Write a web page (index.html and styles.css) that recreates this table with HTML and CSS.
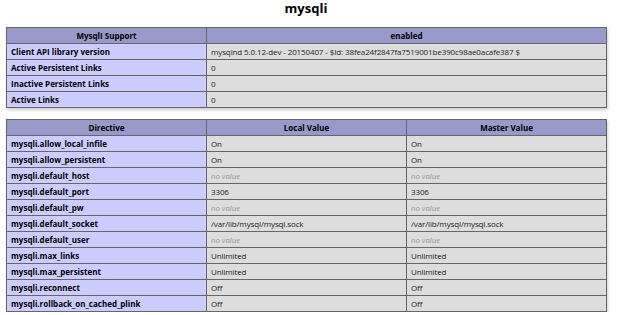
FILE: index.html
```html
<!DOCTYPE html>
<html>
<head>
<meta charset="utf-8">
<link rel="stylesheet" href="styles.css">
</head>
<body>
<div class="page">
  <h2 class="title">mysqli</h2>
  <table class="info">
    <colgroup><col class="c1"><col class="c2"></colgroup>
    <tr class="h"><th>MysqlI Support</th><th>enabled</th></tr>
    <tr><td class="e">Client API library version</td><td class="v">mysqlnd 5.0.12-dev - 20150407 - $Id: 38fea24f2847fa7519001be390c98ae0acafe387 $</td></tr>
    <tr><td class="e">Active Persistent Links</td><td class="v">0</td></tr>
    <tr><td class="e">Inactive Persistent Links</td><td class="v">0</td></tr>
    <tr><td class="e">Active Links</td><td class="v">0</td></tr>
  </table>
  <table class="info second">
    <colgroup><col class="c1"><col class="c3"><col class="c3"></colgroup>
    <tr class="h"><th>Directive</th><th>Local Value</th><th>Master Value</th></tr>
    <tr><td class="e">mysqli.allow_local_infile</td><td class="v">On</td><td class="v">On</td></tr>
    <tr><td class="e">mysqli.allow_persistent</td><td class="v">On</td><td class="v">On</td></tr>
    <tr><td class="e">mysqli.default_host</td><td class="v"><i>no value</i></td><td class="v"><i>no value</i></td></tr>
    <tr><td class="e">mysqli.default_port</td><td class="v">3306</td><td class="v">3306</td></tr>
    <tr><td class="e">mysqli.default_pw</td><td class="v"><i>no value</i></td><td class="v"><i>no value</i></td></tr>
    <tr><td class="e">mysqli.default_socket</td><td class="v">/var/lib/mysql/mysql.sock</td><td class="v">/var/lib/mysql/mysql.sock</td></tr>
    <tr><td class="e">mysqli.default_user</td><td class="v"><i>no value</i></td><td class="v"><i>no value</i></td></tr>
    <tr><td class="e">mysqli.max_links</td><td class="v">Unlimited</td><td class="v">Unlimited</td></tr>
    <tr><td class="e">mysqli.max_persistent</td><td class="v">Unlimited</td><td class="v">Unlimited</td></tr>
    <tr><td class="e">mysqli.reconnect</td><td class="v">Off</td><td class="v">Off</td></tr>
    <tr><td class="e">mysqli.rollback_on_cached_plink</td><td class="v">Off</td><td class="v">Off</td></tr>
  </table>
</div>
</body>
</html>
```
FILE: styles.css
```css
html, body {
  margin: 0;
  padding: 0;
  background: #fff;
}
body {
  font-family: "Open Sans", "Noto Sans", sans-serif;
  color: #222;
}
.page {
  width: 600px;
  margin-left: 6px;
}
.title {
  margin: 0 0 11px 0;
  font-size: 13px;
  line-height: 16px;
  font-weight: bold;
  text-align: center;
  color: #000;
}
.info {
  width: 600px;
  border-collapse: collapse;
  table-layout: fixed;
  box-shadow: 1px 2px 3px #ccc;
}
.second {
  margin-top: 11px;
}
.c1 { width: 200px; }
.c2 { width: 400px; }
.c3 { width: 200px; }
.info th, .info td {
  border: 1px solid #666;
  font-size: 8px;
  line-height: 9px;
  padding: 3px 4px;
  white-space: nowrap;
  overflow: hidden;
  text-align: left;
}
.h th {
  background: #99c;
  text-align: center;
  font-weight: bold;
  color: #000;
}
.e {
  background: #ccf;
  font-weight: bold;
  color: #000;
}
.v {
  background: #ddd;
  color: #222;
  letter-spacing: -0.12px;
}
.v i {
  color: #999;
}
```
